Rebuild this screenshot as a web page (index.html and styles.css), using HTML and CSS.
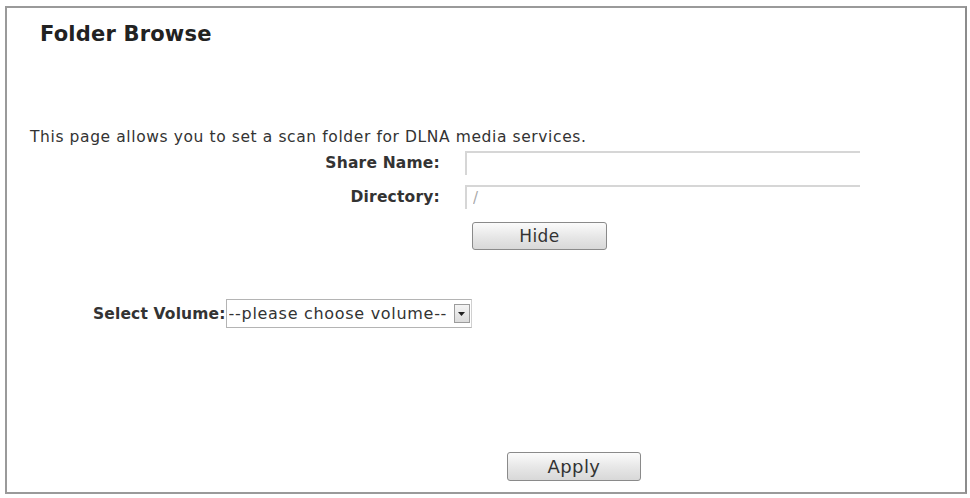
FILE: index.html
```html
<!DOCTYPE html>
<html lang="en">
<head>
    <meta charset="UTF-8">
    <meta name="viewport" content="width=device-width, initial-scale=1.0">
    <title>Folder Browse</title>
    <link rel="stylesheet" href="styles.css">
</head>
<body>
    <div class="panel">
        <h1 class="title">Folder Browse</h1>

        <p class="intro">This page allows you to set a scan folder for DLNA media services.</p>

        <div class="share-form">
            <label for="shareName">Share Name:</label>
            <input type="text" id="shareName" value="">

            <label for="directory">Directory:</label>
            <input type="text" id="directory" value="/" class="dim">

            <span></span>
            <div><button id="hideButton" class="btn btn-hide">Hide</button></div>
        </div>

        <div class="volume-row">
            <label for="volume">Select Volume:</label>
            <div class="select-box">
                <select id="volume">
                    <option>--please choose volume--</option>
                </select>
                <span class="select-arrow">
                    <svg width="7" height="4" viewBox="0 0 7 4"><path d="M0 0h7L3.5 4z" fill="#222"/></svg>
                </span>
            </div>
        </div>

        <div class="actions">
            <button id="applyButton" class="btn btn-apply">Apply</button>
        </div>
    </div>

    <script>
        const hideButton = document.getElementById('hideButton');
        const volumeRow = document.querySelector('.volume-row');

        hideButton.addEventListener('click', () => {
            const hidden = volumeRow.style.visibility === 'hidden';
            volumeRow.style.visibility = hidden ? 'visible' : 'hidden';
            hideButton.textContent = hidden ? 'Hide' : 'Show';
        });
    </script>
</body>
</html>
```

FILE: styles.css
```css
body {
    margin: 0;
    font-family: "DejaVu Sans", Verdana, sans-serif;
    color: #333;
    background: #fff;
}

.panel {
    margin: 6px 3px 0 5px;
    height: 484px;
    border: 2px solid #9a9a9a;
    border-right-color: #8c8c8c;
    position: relative;
}

.title {
    margin: 0;
    padding: 13px 0 0 33px;
    font-size: 21px;
    line-height: 26px;
    letter-spacing: 0.2px;
    color: #222;
}

.intro {
    margin: 81px 0 0 23px;
    font-size: 15.5px;
    line-height: 18px;
    letter-spacing: 0.6px;
}

.share-form {
    display: grid;
    grid-template-columns: 433px 395px;
    column-gap: 25px;
    row-gap: 10px;
    align-items: center;
    margin-top: 5px;
}

.share-form label {
    text-align: right;
    font-weight: bold;
    font-size: 15.5px;
    letter-spacing: 0.2px;
}

.share-form input {
    height: 24px;
    box-sizing: border-box;
    padding: 0 6px;
    border: none;
    border-top: 2px solid #d6d6d6;
    border-left: 2px solid #d6d6d6;
    font-family: inherit;
    font-size: 15px;
    color: #333;
    outline: none;
}

.share-form input.dim {
    color: #aaa;
}

.btn {
    height: 28px;
    border: 1px solid #8a8a8a;
    border-radius: 3px;
    background: linear-gradient(#fbfbfb, #e6e6e6 55%, #d8d8d8);
    font-family: inherit;
    font-size: 17px;
    letter-spacing: 0.4px;
    color: #333;
    padding: 0;
}

.btn-hide {
    width: 135px;
    margin: 3px 0 0 7px;
}

.volume-row {
    display: flex;
    align-items: center;
    margin: 49px 0 0 86px;
}

.volume-row label {
    font-weight: bold;
    font-size: 15.5px;
    letter-spacing: 0.15px;
}

.select-box {
    display: flex;
    align-items: center;
    width: 246px;
    height: 29px;
    box-sizing: border-box;
    border: 1px solid #b4b4b4;
    border-right-color: #d0d0d0;
    padding-right: 1px;
}

.select-box select {
    flex: 1;
    min-width: 0;
    appearance: none;
    border: none;
    background: transparent;
    font-family: inherit;
    font-size: 16px;
    letter-spacing: 0.7px;
    color: #333;
    padding: 0 2px;
    outline: none;
}

.select-arrow {
    display: flex;
    align-items: center;
    justify-content: center;
    width: 14px;
    height: 17px;
    border: 1px solid #9c9c9c;
    background: linear-gradient(#f4f4f4, #dcdcdc);
}

.actions {
    margin: 124px 0 0 500px;
}

.btn-apply {
    width: 134px;
    height: 29px;
    font-size: 18px;
}
```
